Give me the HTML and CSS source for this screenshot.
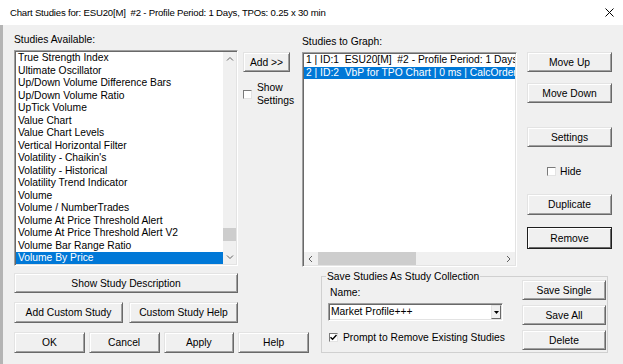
FILE: index.html
```html
<!DOCTYPE html>
<html>
<head>
<meta charset="utf-8">
<title>Chart Studies</title>
<link rel="stylesheet" href="styles.css">
</head>
<body>
<div class="titlebar">
  <span class="title">Chart Studies for: ESU20[M]  #2 - Profile Period: 1 Days, TPOs: 0.25 x 30 min</span>
  <svg class="close" width="9" height="9" viewBox="0 0 9 9"><path d="M0.5 0.5L8.5 8.5M8.5 0.5L0.5 8.5" stroke="#000" stroke-width="1" fill="none"/></svg>
</div>
<div class="main">
  <div class="top">
    <div class="col-avail">
      <div class="label">Studies Available:</div>
      <div class="listbox avail">
        <ul class="items">
          <li>True Strength Index</li>
          <li>Ultimate Oscillator</li>
          <li>Up/Down Volume Difference Bars</li>
          <li>Up/Down Volume Ratio</li>
          <li>UpTick Volume</li>
          <li>Value Chart</li>
          <li>Value Chart Levels</li>
          <li>Vertical Horizontal Filter</li>
          <li>Volatility - Chaikin's</li>
          <li>Volatility - Historical</li>
          <li>Volatility Trend Indicator</li>
          <li>Volume</li>
          <li>Volume / NumberTrades</li>
          <li>Volume At Price Threshold Alert</li>
          <li>Volume At Price Threshold Alert V2</li>
          <li>Volume Bar Range Ratio</li>
          <li class="sel">Volume By Price</li>
          <li>Volume By Price Range Extensions</li>
        </ul>
        <div class="vscroll">
          <div class="arrow"><svg width="8" height="5" viewBox="0 0 8 5"><path d="M1 4.5L4 1.5L7 4.5" stroke="#606060" fill="none"/></svg></div>
          <div class="vtrack"><div class="vthumb"></div></div>
          <div class="arrow"><svg width="8" height="5" viewBox="0 0 8 5"><path d="M1 0.5L4 3.5L7 0.5" stroke="#606060" fill="none"/></svg></div>
        </div>
      </div>
    </div>
    <div class="col-add">
      <button class="btn b-add">Add &gt;&gt;</button>
      <div class="check-row show-settings">
        <span class="cb"></span>
        <span>Show<br>Settings</span>
      </div>
    </div>
    <div class="col-graph">
      <div class="label">Studies to Graph:</div>
      <div class="listbox graph">
        <ul class="items">
          <li>1 | ID:1  ESU20[M]  #2 - Profile Period: 1 Days, TPOs: 0.25 x 30 min</li>
          <li class="sel">2 | ID:2  VbP for TPO Chart | 0 ms | CalcOrder: 2</li>
        </ul>
        <div class="hscroll">
          <div class="arrow"><svg width="5" height="8" viewBox="0 0 5 8"><path d="M4 1L1 4L4 7" stroke="#606060" fill="none"/></svg></div>
          <div class="htrack"><div class="hthumb"></div></div>
          <div class="arrow"><svg width="5" height="8" viewBox="0 0 5 8"><path d="M1 1L4 4L1 7" stroke="#606060" fill="none"/></svg></div>
        </div>
      </div>
    </div>
    <div class="col-actions">
      <button class="btn b-moveup">Move Up</button>
      <button class="btn b-movedown">Move Down</button>
      <button class="btn b-settings">Settings</button>
      <div class="check-row hide-row">
        <span class="cb"></span>
        <span>Hide</span>
      </div>
      <button class="btn b-dup">Duplicate</button>
      <button class="btn default b-remove">Remove</button>
    </div>
  </div>
  <div class="bottom">
    <div class="bottom-left">
      <button class="btn b-desc">Show Study Description</button>
      <div class="row2">
        <button class="btn">Add Custom Study</button>
        <button class="btn">Custom Study Help</button>
      </div>
      <div class="row3">
        <button class="btn">OK</button>
        <button class="btn">Cancel</button>
        <button class="btn">Apply</button>
        <button class="btn">Help</button>
      </div>
    </div>
    <div class="group">
      <div class="group-left">
        <div class="legend">Save Studies As Study Collection</div>
        <div class="name-label">Name:</div>
        <div class="combo">
          <span class="combo-text">Market Profile+++</span>
          <span class="combo-btn"><svg width="5" height="3" viewBox="0 0 5 3"><path d="M0 0H5L2.5 3Z" fill="#000"/></svg></span>
        </div>
        <div class="check-row prompt-row">
          <span class="cb"><svg width="7" height="7" viewBox="0 0 7 7"><path d="M0.5 3.2L2.6 5.3L6.5 1" stroke="#000" stroke-width="1.4" fill="none"/></svg></span>
          <span>Prompt to Remove Existing Studies</span>
        </div>
      </div>
      <div class="group-right">
        <button class="btn b-single">Save Single</button>
        <button class="btn b-all">Save All</button>
        <button class="btn b-delete">Delete</button>
      </div>
    </div>
  </div>
</div>
</body>
</html>
```

FILE: styles.css
```css
* { box-sizing: border-box; }

body {
  margin: 0;
  width: 623px;
  height: 364px;
  overflow: hidden;
  background: #f0f0f0;
  font-family: "Liberation Sans", Arial, sans-serif;
  font-size: 10.3px;
  color: #000;
}

.titlebar {
  height: 25px;
  background: #fff;
  display: flex;
  align-items: center;
  justify-content: space-between;
  padding: 0 9px 0 10px;
}
.title { font-size: 9.6px; letter-spacing: -0.2px; white-space: pre; }
.close { display: block; }

.main {
  height: 339px;
  border-left: 3px solid #b4b4b4;
  padding: 8px 0 0 11px;
}

.top { display: flex; align-items: flex-start; }
.label { height: 13px; line-height: 13px; white-space: nowrap; }

/* list boxes */
.listbox {
  background: #fff;
  border: 1px solid;
  border-color: #a0a0a0 #fff #fff #a0a0a0;
  padding: 1px;
  box-shadow: inset 1px 1px 0 #696969, inset -1px -1px 0 #e3e3e3;
}
.items {
  list-style: none;
  margin: 0;
  padding: 0;
  flex: 1;
  overflow: hidden;
  min-width: 0;
  min-height: 0;
}
.items li {
  height: 12.5px;
  line-height: 12.5px;
  padding-left: 2px;
  white-space: pre;
  overflow: hidden;
  text-overflow: clip;
}
.items li.sel { background: #0078d7; color: #fff; }

.col-avail { width: 224px; }
.avail { margin-top: 4px; height: 216px; display: flex; }
.vscroll {
  width: 13px;
  flex: none;
  display: flex;
  flex-direction: column;
  background: #f0f0f0;
}
.arrow {
  flex: none;
  width: 13px;
  height: 13px;
  display: flex;
  align-items: center;
  justify-content: center;
}
.arrow svg { display: block; }
.vtrack { flex: 1; display: flex; flex-direction: column; justify-content: flex-end; }
.vthumb { height: 13px; margin-bottom: 10px; background: #cdcdcd; }

.col-graph { width: 215px; margin-left: 12px; }
.col-graph .label { margin-top: 2px; }
.graph { margin-top: 4px; height: 215px; display: flex; flex-direction: column; }
.hscroll { flex: none; height: 13px; display: flex; background: #f0f0f0; }
.htrack { flex: 1; }
.hthumb { width: 98px; height: 100%; margin-left: 1px; background: #cdcdcd; }

/* buttons */
.btn {
  display: flex;
  align-items: center;
  justify-content: center;
  height: 20px;
  margin: 0;
  padding: 0;
  font: inherit;
  color: #000;
  background: #f0f0f0;
  border: 1px solid;
  border-color: #e3e3e3 #696969 #696969 #e3e3e3;
  box-shadow: inset 1px 1px 0 #fff, inset -1px -1px 0 #a0a0a0;
  white-space: nowrap;
}
.btn.default {
  border-color: #1e1e1e;
  box-shadow: inset 1px 1px 0 #fff, inset -1px -1px 0 #696969;
}

/* checkboxes */
.check-row { display: flex; align-items: center; gap: 5px; line-height: 13px; }
.cb {
  flex: none;
  width: 9px;
  height: 9px;
  background: #fff;
  border: 1px solid;
  border-color: #7a7a7a #e3e3e3 #e3e3e3 #7a7a7a;
  display: flex;
  align-items: center;
  justify-content: center;
}
.cb svg { display: block; }

.col-add { width: 47px; margin-left: 5px; }
.b-add { width: 100%; margin-top: 19px; }
.show-settings { margin-top: 9px; }

.col-actions { width: 85px; margin-left: 10px; }
.col-actions .btn { width: 100%; }
.b-moveup { margin-top: 19px; }
.b-movedown { margin-top: 11px; }
.b-settings { margin-top: 24px; }
.hide-row { margin-top: 18px; margin-left: 20px; gap: 4px; }
.col-actions .b-dup { margin-top: 16px; height: 21px; }
.col-actions .b-remove { margin-top: 12px; height: 22px; }

/* bottom */
.bottom { display: flex; align-items: flex-start; margin-top: 2px; }
.bottom-left { width: 295px; padding-top: 4px; }
.b-desc { width: 224px; }
.row2 { display: flex; gap: 6px; width: 224px; margin-top: 9px; }
.row2 .btn { flex: 1; height: 21px; }
.row3 { display: grid; grid-template-columns: repeat(4, 1fr); gap: 4px; margin-top: 9px; }
.row3 .btn { height: 21px; }

.group {
  width: 287px;
  height: 77px;
  margin: 7px 0 0 12px;
  border: 1px solid #d0d0d0;
  display: flex;
  padding: 0 1px 0 4px;
}
.group-left { width: 196px; }
.legend {
  display: table;
  margin-top: -7px;
  padding: 0 1px;
  background: #f0f0f0;
  line-height: 13px;
}
.name-label { margin-top: 3px; padding-left: 4px; line-height: 13px; }
.combo {
  margin: 4px 0 0 2px;
  width: 175px;
  height: 18px;
  display: flex;
  align-items: stretch;
  background: #fff;
  border: 1px solid;
  border-color: #a0a0a0 #fff #fff #a0a0a0;
  padding: 1px;
  box-shadow: inset 1px 1px 0 #696969, inset -1px -1px 0 #e3e3e3;
}
.combo-text { flex: 1; padding-left: 1px; line-height: 14px; white-space: nowrap; }
.combo-btn {
  flex: none;
  width: 10px;
  display: flex;
  align-items: center;
  justify-content: center;
  background: #f0f0f0;
  border: 1px solid;
  border-color: #e3e3e3 #696969 #696969 #e3e3e3;
}
.combo-btn svg { display: block; }
.prompt-row { margin: 10px 0 0 3px; }

.group-right { width: 84px; display: flex; flex-direction: column; }
.b-single { margin-top: 3px; }
.b-all { margin-top: 5px; }
.b-delete { margin-top: 5px; }
```
